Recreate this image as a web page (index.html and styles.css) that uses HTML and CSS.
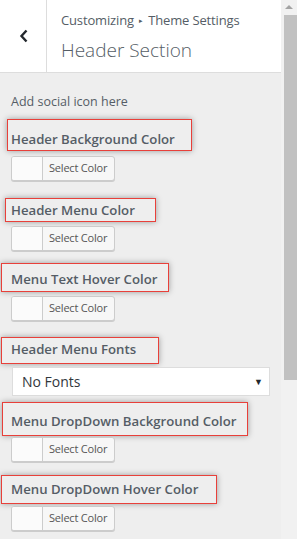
FILE: index.html
```html
<!DOCTYPE html>
<html lang="en">
<head>
    <meta charset="UTF-8">
    <meta name="viewport" content="width=device-width, initial-scale=1.0">
    <title>Customizer - Header Section</title>
    <link rel="stylesheet" href="styles.css">
</head>
<body>

    <div class="panel">
        <div class="panel-header">
            <button class="back-button" aria-label="Back">
                <svg width="10" height="14" viewBox="0 0 10 14">
                    <path d="M7.5 1.5 L2.5 7 L7.5 12.5" fill="none" stroke="#23282d" stroke-width="2.4"/>
                </svg>
            </button>
            <div class="panel-title">
                <span class="breadcrumb">Customizing <span class="crumb-sep">&#9656;</span> Theme Settings</span>
                <h2>Header Section</h2>
            </div>
        </div>

        <div class="panel-body">
            <p class="description">Add social icon here</p>

            <div class="field field-1">
                <span class="field-title">Header Background Color</span>
                <button class="color-button"><span class="swatch"></span><span class="color-text">Select Color</span></button>
            </div>

            <div class="field field-2">
                <span class="field-title">Header Menu Color</span>
                <button class="color-button"><span class="swatch"></span><span class="color-text">Select Color</span></button>
            </div>

            <div class="field field-3">
                <span class="field-title">Menu Text Hover Color</span>
                <button class="color-button"><span class="swatch"></span><span class="color-text">Select Color</span></button>
            </div>

            <div class="field field-4">
                <span class="field-title">Header Menu Fonts</span>
                <div class="select-box">
                    <span>No Fonts</span>
                    <span class="select-arrow">&#9660;</span>
                </div>
            </div>

            <div class="field field-5">
                <span class="field-title">Menu DropDown Background Color</span>
                <button class="color-button"><span class="swatch"></span><span class="color-text">Select Color</span></button>
            </div>

            <div class="field field-6">
                <span class="field-title">Menu DropDown Hover Color</span>
                <button class="color-button"><span class="swatch"></span><span class="color-text">Select Color</span></button>
            </div>
        </div>
    </div>

    <div class="scrollbar">
        <div class="scroll-arrow"></div>
        <div class="scroll-thumb"></div>
    </div>

</body>
</html>
```

FILE: styles.css
```css
html, body {
    height: 100%;
    margin: 0;
    padding: 0;
    overflow: hidden;
}

body {
    font-family: 'Open Sans', sans-serif;
    background: #eeeeee;
    color: #555d66;
    display: flex;
}

.panel {
    width: 281px;
    flex-shrink: 0;
}

/* header */

.panel-header {
    display: flex;
    height: 72px;
    background: #fff;
    border-bottom: 1px solid #dddddd;
}

.back-button {
    width: 47px;
    padding: 0 0 0 1px;
    margin: 0;
    border: none;
    border-right: 1px solid #dddddd;
    background: #fff;
    display: flex;
    align-items: center;
    justify-content: center;
}

.panel-title {
    padding: 10px 0 0 14px;
}

.breadcrumb {
    display: block;
    font-size: 13px;
    line-height: 20px;
    letter-spacing: -0.15px;
    color: #555d66;
}

.crumb-sep {
    font-size: 7px;
    vertical-align: 2px;
    margin: 0 2px;
}

.panel-title h2 {
    margin: 5px 0 0;
    font-size: 19px;
    font-weight: 300;
    line-height: 28px;
    color: #555d66;
}

/* fields */

.panel-body {
    padding: 19px 0 0;
}

.description {
    margin: 0 0 7px 11px;
    font-size: 12.5px;
    line-height: 20px;
}

.field-title {
    display: block;
    box-sizing: border-box;
    border: 1px solid #e8403a;
    box-shadow: 0 0 6px rgba(0, 0, 0, 0.35);
    font-size: 13.2px;
    font-weight: 600;
    line-height: 20px;
    color: #555d66;
    white-space: nowrap;
}

.field-1 .field-title { margin-left: 7px; width: 185px; height: 32px; padding: 9px 0 0 3px; }
.field-2 .field-title { margin-left: 5px; width: 151px; height: 24px; padding: 1px 0 0 5px; }
.field-3 .field-title { margin-left: 1px; width: 168px; height: 29px; padding: 5px 0 0 9px; }
.field-4 .field-title { margin-left: 1px; width: 158px; height: 27px; padding: 1px 0 0 9px; }
.field-5 .field-title { margin-left: 2px; width: 246px; height: 34px; padding: 8px 0 0 8px; }
.field-6 .field-title { margin-left: 1px; width: 216px; height: 29px; padding: 3px 0 0 9px; }

.field-1 { margin-bottom: 17px; }
.field-2 { margin-bottom: 12px; }
.field-3 { margin-bottom: 16px; }
.field-4 { margin-bottom: 6px; }
.field-5 { margin-bottom: 13px; }

.field-1 .color-button { margin-top: 5px; }
.field-2 .color-button { margin-top: 4px; }
.field-3 .color-button { margin-top: 4px; }
.field-4 .select-box { margin-top: 3px; }
.field-5 .color-button { margin-top: 1px; }
.field-6 .color-button { margin-top: 2px; }

.color-button {
    display: flex;
    margin-left: 11px;
    padding: 0;
    width: 104px;
    height: 25px;
    border: 1px solid #cccccc;
    border-radius: 3px;
    background: #f7f7f7;
    box-shadow: 0 1px 0 #cccccc;
    font-family: inherit;
    cursor: pointer;
}

.swatch {
    width: 30px;
    height: 100%;
    background: #fbfbfb;
    border-right: 1px solid #cccccc;
    border-radius: 2px 0 0 2px;
}

.color-text {
    padding-left: 6px;
    font-size: 11px;
    line-height: 22px;
    letter-spacing: -0.2px;
    color: #555555;
}

.select-box {
    display: flex;
    justify-content: space-between;
    align-items: center;
    box-sizing: border-box;
    margin-left: 12px;
    width: 258px;
    height: 29px;
    padding: 0 6px 0 9px;
    background: #fff;
    border: 1px solid #dddddd;
    font-size: 14px;
    color: #32373c;
}

.select-arrow {
    font-size: 9px;
    color: #23282d;
}

/* fake scrollbar */

.scrollbar {
    width: 16px;
    background: #f1f1f1;
    display: flex;
    flex-direction: column;
    align-items: center;
}

.scroll-arrow {
    margin-top: 5px;
    width: 0;
    height: 0;
    border-left: 4px solid transparent;
    border-right: 4px solid transparent;
    border-bottom: 4px solid #a3a3a3;
}

.scroll-thumb {
    margin-top: 6px;
    margin-left: 3px;
    width: 13px;
    height: 365px;
    background: #c1c1c1;
}
```
